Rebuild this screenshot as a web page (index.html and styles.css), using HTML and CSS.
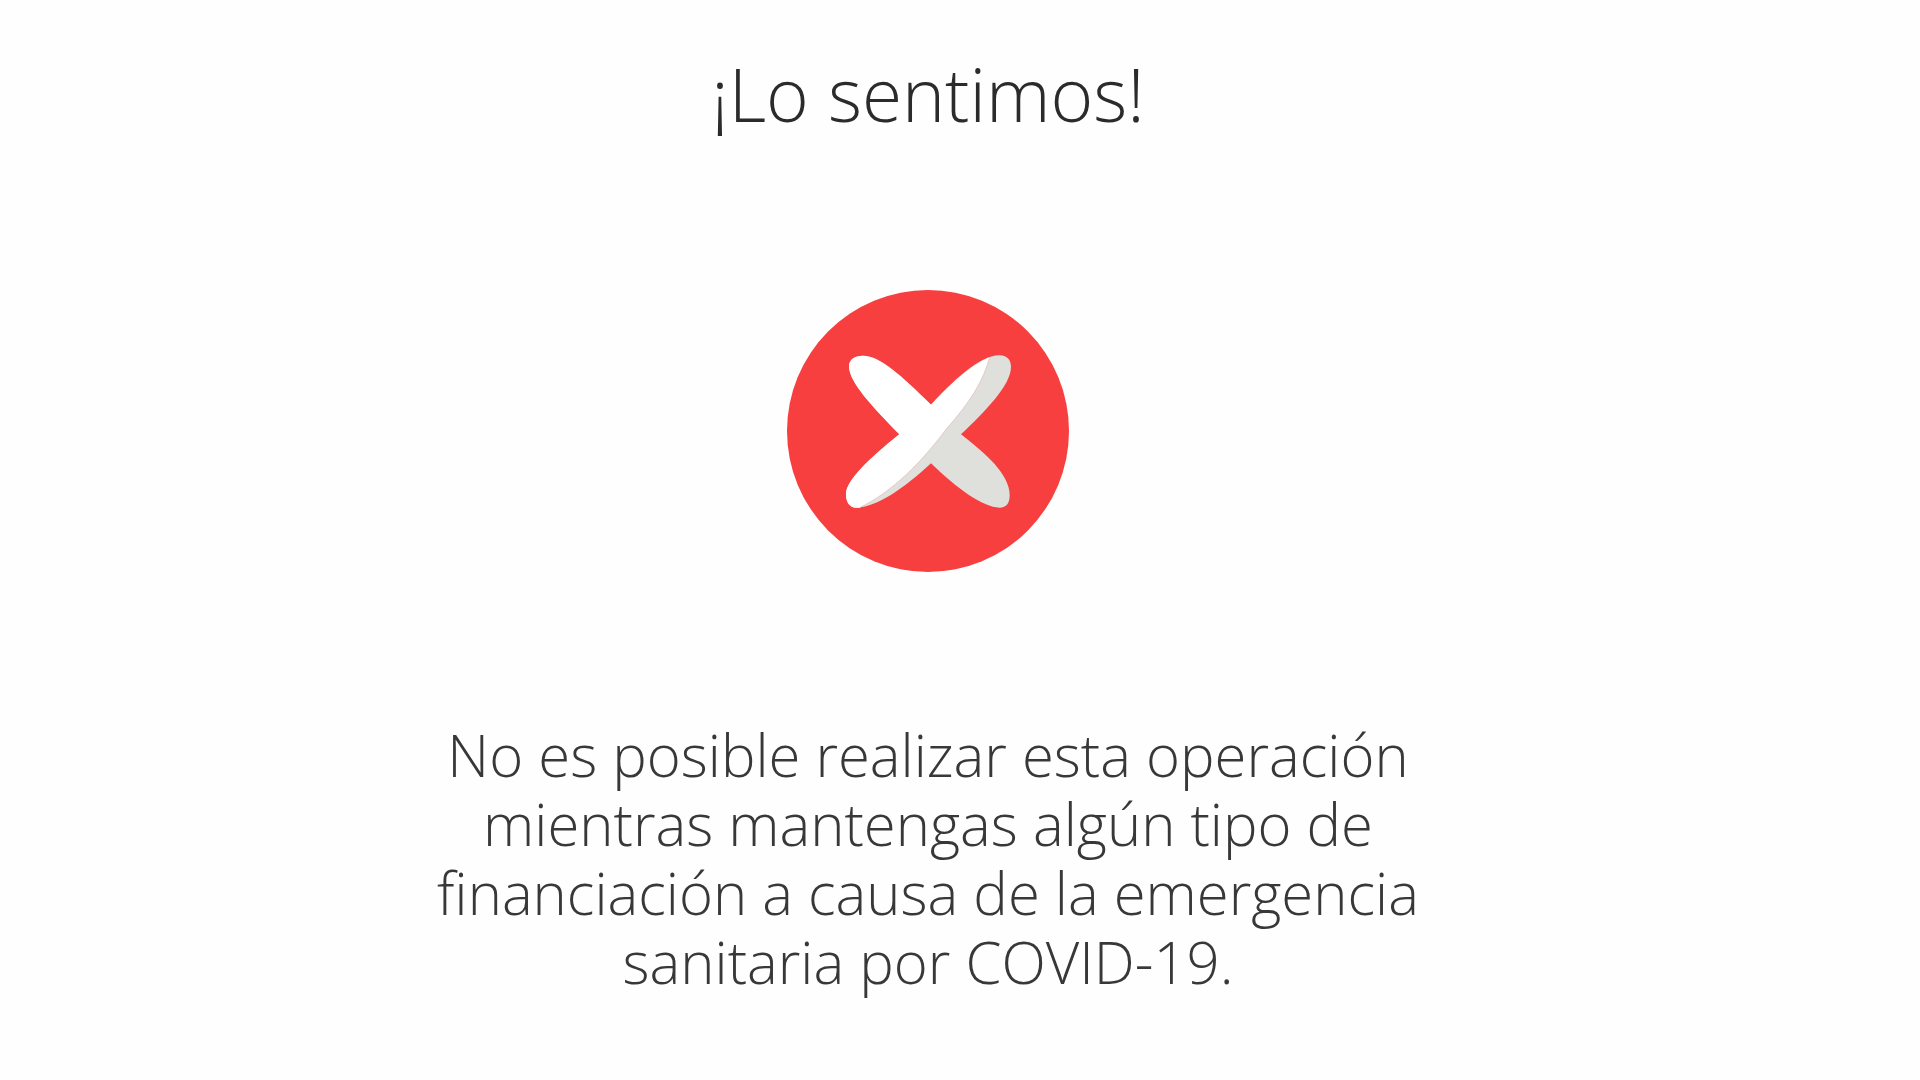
FILE: index.html
```html
<!DOCTYPE html>
<html lang="es">
<head>
  <meta charset="UTF-8" />
  <meta name="viewport" content="width=device-width, initial-scale=1" />
  <title>¡Lo sentimos!</title>
  <link rel="stylesheet" href="styles.css">
</head>
<body>

  <main class="error-container">
    <h1 class="error-title">¡Lo sentimos!</h1>

    <svg class="error-icon" viewBox="52 58 846 846" aria-hidden="true">
      <circle cx="475" cy="481" r="423" fill="#f63f3e" />
      <!-- shaded side of the cross -->
      <path fill="#dfdfdb" d="M238 287C238 267 255 255 280 255C330 255 395 314 484 402C545 338 625 254 690 254C710 254 724 266 724 288C724 345 645 423 574 491C650 550 720 612 720 674C720 698 710 711 690 711C640 711 560 652 484 578C405 652 320 711 260 711C240 711 229 695 229 670C229 630 300 562 389 491C310 410 238 335 238 287Z" />
      <!-- lit side -->
      <path fill="#fff" d="M238 287C238 267 255 255 280 255C330 255 395 314 484 402C530 354 590 292 660 259C642 330 600 396 530 475C455 575 370 662 270 711L260 711C240 711 229 695 229 670C229 630 300 562 389 491C310 410 238 335 238 287Z" />
      <path fill="none" stroke="#dcb8b6" stroke-width="2" d="M660 259C642 330 600 396 530 475C455 575 370 662 270 711" />
    </svg>

    <p class="error-message">No es posible realizar esta operación mientras mantengas algún tipo de financiación a causa de la emergencia sanitaria por COVID-19.</p>
  </main>

</body>
</html>
```

FILE: styles.css
```css
body {
  margin: 0;
  font-family: 'Open Sans', sans-serif;
  font-weight: 300;
  background: #fefefe;
  color: #2b2b2b;
}
.error-container {
  display: flex;
  flex-direction: column;
  align-items: center;
  padding: 44px 64px 60px 0;
  text-align: center;
}
.error-title {
  margin: 0;
  font-size: 73px;
  font-weight: 300;
  line-height: 100px;
}
.error-icon {
  display: block;
  width: 282px;
  height: 282px;
  margin: 146px 0 148px;
}
.error-message {
  max-width: 1000px;
  margin: 0;
  font-size: 58px;
  line-height: 69px;
  color: #383838;
}
```
